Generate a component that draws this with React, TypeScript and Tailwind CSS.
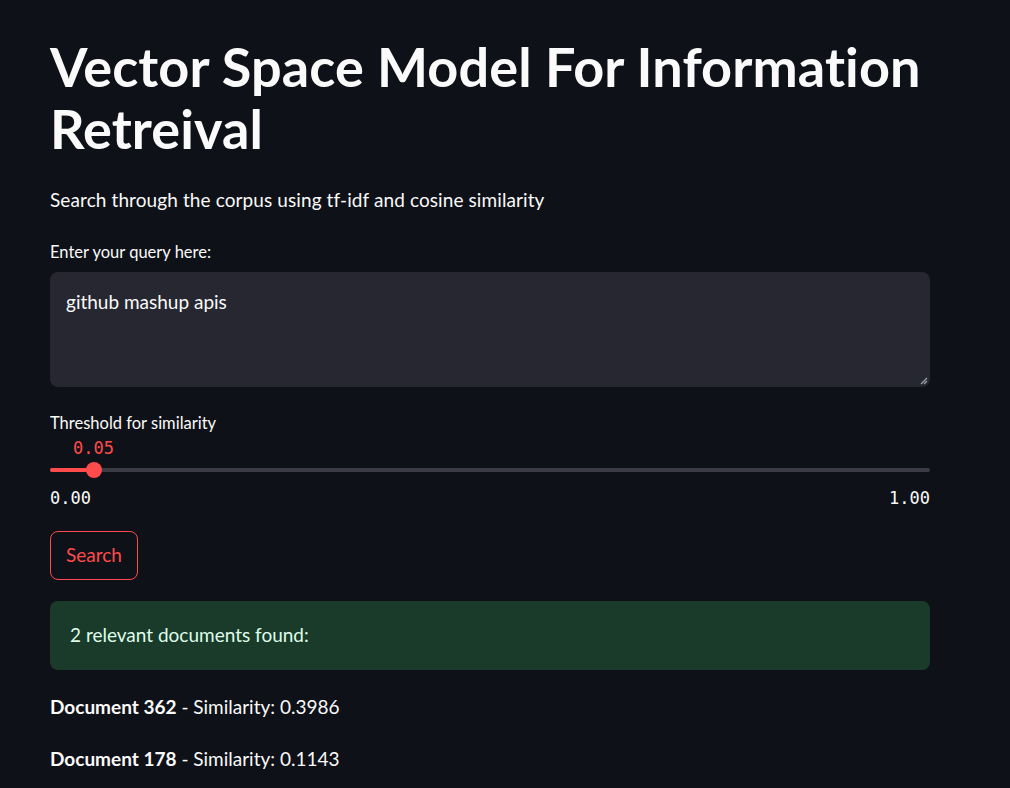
export default function App() {
  return (
    <div className="min-h-screen bg-[#0e1117] text-[#fafafa] font-['Lato','Noto_Sans',sans-serif]">
      <div className="w-[880px] ml-[50px] pt-[36px] flex flex-col">
        <h1 className="text-[54px] font-bold leading-[62px] tracking-[0.1px]">
          Vector Space Model For Information Retreival
        </h1>

        <p className="mt-[27px] text-[19px] leading-[26px] tracking-[0.1px]">Search through the corpus using tf-idf and cosine similarity</p>

        {/* query */}
        <label className="mt-[28px] text-[16.5px] leading-[22px]">Enter your query here:</label>
        <div className="relative mt-[9px] h-[115px] rounded-lg bg-[#262730] px-4 pt-[17px] text-[19px] leading-[26px]">
          github mashup apis
          <svg className="absolute right-[2px] bottom-[2px]" width="8" height="8" viewBox="0 0 8 8">
            <path d="M7 1L1 7M7 4L4 7" stroke="#9ca3af" strokeWidth="1.2" />
          </svg>
        </div>

        {/* slider */}
        <div className="mt-[25px] text-[16.5px] leading-[22px]">Threshold for similarity</div>
        <div className="flex flex-col">
          <span className="pl-[23px] mt-[3px] font-['DejaVu_Sans_Mono',monospace] text-[17px] leading-[22px] text-[#ff4b4b]">0.05</span>
          <div className="relative mt-[9px] h-[4px] rounded-full bg-[#3a3b44] flex">
            <div className="w-[44px] h-full rounded-full bg-[#ff4b4b]" />
            <div className="absolute left-[36px] top-[-6px] h-[16px] w-[16px] rounded-full bg-[#ff4b4b]" />
          </div>
          <div className="mt-[15px] flex justify-between font-['DejaVu_Sans_Mono',monospace] text-[17px] leading-[22px]">
            <span>0.00</span>
            <span>1.00</span>
          </div>
        </div>

        <button className="self-start mt-[22px] h-[49px] rounded-lg border border-[#ff4b4b] px-[15px] text-[19px] text-[#ff4b4b]">
          Search
        </button>

        <div className="mt-[21px] h-[69px] rounded-lg bg-[#1a3b29] px-5 flex items-center text-[19px] text-[#dffde9]">
          2 relevant documents found:
        </div>

        <p className="mt-[24px] text-[19px] leading-[26px]">
          <span className="font-bold">Document 362</span> - Similarity: 0.3986
        </p>
        <p className="mt-[26px] text-[19px] leading-[26px]">
          <span className="font-bold">Document 178</span> - Similarity: 0.1143
        </p>
      </div>
    </div>
  );
}
